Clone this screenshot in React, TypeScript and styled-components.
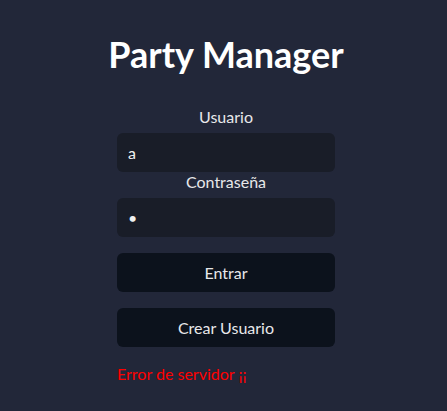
import React from "react";
import styled, { createGlobalStyle } from "styled-components";

const Global = createGlobalStyle`
  html, body { margin: 0; padding: 0; background: #222739; }
  body { font-family: "Lato", "Open Sans", sans-serif; color: #e8e8ea; }
  * { box-sizing: border-box; }
`;

const Page = styled.div`
  min-height: 411px;
  display: flex;
  flex-direction: column;
  align-items: center;
  padding: 32px 0 0 5px;
`;

const Title = styled.h1`
  margin: 0 0 31px;
  font-size: 36px;
  line-height: 44px;
  font-weight: 700;
  color: #ffffff;
`;

const Form = styled.form`
  width: 218px;
  display: flex;
  flex-direction: column;
`;

const Label = styled.label`
  display: block;
  text-align: center;
  font-size: 16px;
  line-height: 20px;
  margin-bottom: 6px;
`;

const Input = styled.input`
  height: 39px;
  width: 100%;
  border: none;
  outline: none;
  border-radius: 6px;
  background: #191d28;
  color: #f0f0f0;
  font-family: inherit;
  font-size: 16px;
  padding: 0 11px;
`;

const Button = styled.button`
  height: 39px;
  width: 100%;
  border: none;
  border-radius: 6px;
  background: #0c121c;
  color: #e8e8ea;
  font-family: inherit;
  font-size: 16px;
  margin-top: 16px;
  cursor: pointer;
`;

const ErrorText = styled.p`
  margin: 17px 0 0;
  color: #ff0000;
  font-size: 16px;
  line-height: 20px;
`;

export default function App() {
  return (
    <>
      <Global />
      <Page>
        <Title>Party Manager</Title>
        <Form onSubmit={(e) => e.preventDefault()}>
          <Label htmlFor="u">Usuario</Label>
          <Input id="u" type="text" defaultValue="a" />
          <Label htmlFor="p">Contraseña</Label>
          <Input id="p" type="password" defaultValue="a" />
          <Button type="submit">Entrar</Button>
          <Button type="button">Crear Usuario</Button>
          <ErrorText>Error de servidor ¡¡</ErrorText>
        </Form>
      </Page>
    </>
  );
}
